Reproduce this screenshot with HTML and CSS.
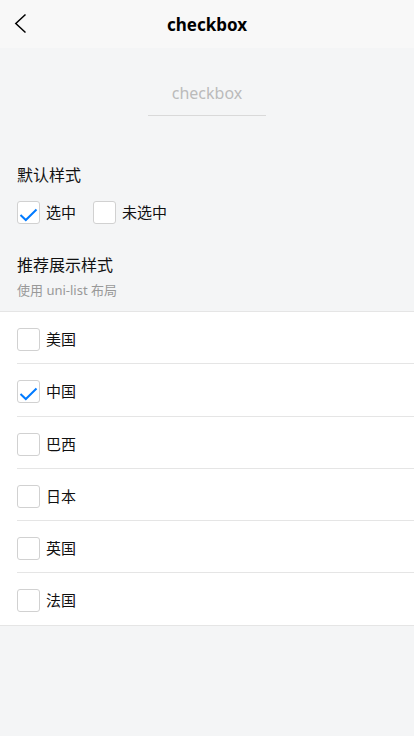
FILE: index.html
```html
<!DOCTYPE html>
<html lang="zh-CN">
<head>
<meta charset="utf-8">
<meta name="viewport" content="width=device-width, initial-scale=1">
<title>checkbox</title>
<link rel="stylesheet" href="styles.css">
</head>
<body>
<div class="page">
  <header class="navbar">
    <span class="back">
      <svg width="14" height="22" viewBox="0 0 14 22"><polyline points="11.5,1.5 1.8,10.5 11.5,19.5" fill="none" stroke="#000" stroke-width="1.5"/></svg>
    </span>
    <h1 class="nav-title">checkbox</h1>
  </header>

  <div class="input-wrap">
    <div class="input">checkbox</div>
  </div>

  <section class="block">
    <div class="block-title">默认样式</div>
    <div class="inline-group">
      <label class="cb-item">
        <span class="cb checked">
          <svg width="23" height="23" viewBox="0 0 23 23"><polyline points="3.5,14 8.8,19 19.5,8.5" fill="none" stroke="#007aff" stroke-width="2"/></svg>
        </span>
        <span class="cb-label">选中</span>
      </label>
      <label class="cb-item">
        <span class="cb"></span>
        <span class="cb-label">未选中</span>
      </label>
    </div>
  </section>

  <section class="block block-2">
    <div class="block-title">推荐展示样式</div>
    <div class="block-sub">使用 uni-list 布局</div>
  </section>

  <ul class="list">
    <li class="list-item"><span class="cb"></span><span class="cb-label">美国</span></li>
    <li class="list-item"><span class="cb checked"><svg width="23" height="23" viewBox="0 0 23 23"><polyline points="3.5,14 8.8,19 19.5,8.5" fill="none" stroke="#007aff" stroke-width="2"/></svg></span><span class="cb-label">中国</span></li>
    <li class="list-item"><span class="cb"></span><span class="cb-label">巴西</span></li>
    <li class="list-item"><span class="cb"></span><span class="cb-label">日本</span></li>
    <li class="list-item"><span class="cb"></span><span class="cb-label">英国</span></li>
    <li class="list-item"><span class="cb"></span><span class="cb-label">法国</span></li>
  </ul>
</div>
</body>
</html>
```

FILE: styles.css
```css
* { box-sizing: border-box; }
html, body {
  margin: 0;
  padding: 0;
  background: #f4f5f6;
  font-family: "Noto Sans", "Noto Sans CJK SC", sans-serif;
  color: #000;
}
.page {
  width: 414px;
  min-height: 736px;
  background: #f4f5f6;
}
.navbar {
  height: 48px;
  background: #f8f8f8;
  display: flex;
  align-items: center;
  justify-content: center;
  position: relative;
}
.back {
  position: absolute;
  left: 14px;
  top: 13px;
  width: 14px;
  height: 22px;
  display: block;
}
.back svg { display: block; }
.nav-title {
  margin: 0;
  font-size: 17px;
  font-weight: 700;
  line-height: 24px;
  margin-top: 2px;
}
.input-wrap {
  display: flex;
  justify-content: center;
  padding-top: 23px;
}
.input {
  width: 118px;
  height: 45px;
  line-height: 44px;
  text-align: center;
  font-size: 16px;
  color: #bbbbbb;
  border-bottom: 1px solid #d9d9d9;
}
.block {
  padding: 0 17px;
  margin-top: 47px;
}
.block-title {
  font-size: 16px;
  line-height: 24px;
  color: #111;
}
.inline-group {
  display: flex;
  gap: 17px;
  margin-top: 14px;
}
.cb-item {
  display: flex;
  align-items: center;
}
.cb {
  width: 23px;
  height: 23px;
  border: 1px solid #d1d1d1;
  border-radius: 3px;
  background: #fff;
  position: relative;
  flex: none;
}
.cb svg {
  position: absolute;
  left: -1px;
  top: -1px;
  display: block;
}
.cb-label {
  font-size: 15px;
  line-height: 23px;
  margin-left: 6px;
  color: #111;
}
.block-2 {
  margin-top: 29px;
}
.block-sub {
  font-size: 13px;
  line-height: 18px;
  color: #999;
  margin-top: 4px;
}
.list {
  list-style: none;
  margin: 12px 0 0;
  padding: 0;
  background: #fff;
  border-top: 1px solid #e5e5e5;
  border-bottom: 1px solid #e5e5e5;
}
.list-item {
  height: 52px;
  display: flex;
  align-items: center;
  margin-left: 17px;
  padding-top: 3px;
  border-bottom: 1px solid #e5e5e5;
}
.list-item:nth-child(2) {
  height: 53px;
}
.list-item:last-child {
  border-bottom: none;
  height: 52px;
}
```
